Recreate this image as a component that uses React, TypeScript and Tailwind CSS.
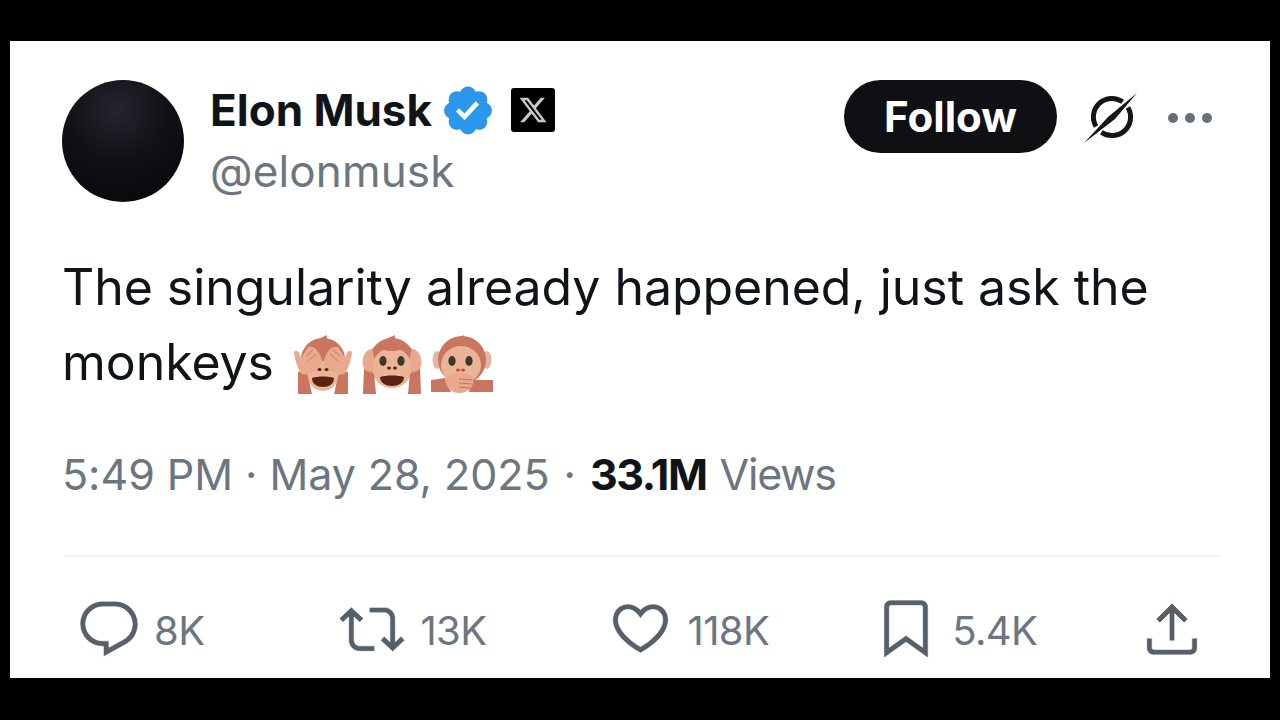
const sans = "font-['Inter','Liberation_Sans',sans-serif]";

function Glyph({ box, d, className }: { box: string; d: string; className: string }) {
  return (
    <svg viewBox={box} className={className} fill="currentColor" stroke="#ffffff" strokeWidth="0.25">
      <path d={d} />
    </svg>
  );
}

const FUR = "#c9755f";
const FUR_DARK = "#b9604f";
const SKIN = "#ebb397";
const HAND = "#e9a98e";
const MOUTH = "#5a2410";
const EYE = "#3c3a26";

function Tuft() {
  return <path d="M22 11 C25 6 30 5 34 3 C33 6 35 8 38 11 Z" fill={FUR} />;
}

function MonkeyOne() {
  return (
    <svg viewBox="0 0 60 62" className="w-[60px] h-[62px]">
      <Tuft />
      <ellipse cx="30" cy="27" rx="22" ry="21" fill={FUR} />
      <ellipse cx="30" cy="44" rx="15" ry="15" fill={SKIN} />
      <path d="M5 62 L5 40 L14 40 L19 62 Z" fill={FUR} />
      <path d="M55 62 L55 40 L46 40 L41 62 Z" fill={FUR} />
      <path d="M1 21 C1 18 5 18 6 21 L8 26 L15 15 C21 13 27 20 29 28 C29 34 25 39 21 39 C17 43 10 44 7 40 C4 34 2 28 1 21 Z" fill={HAND} />
      <path d="M59 21 C59 18 55 18 54 21 L52 26 L45 15 C39 13 33 20 31 28 C31 34 35 39 39 39 C43 43 50 44 53 40 C56 34 58 28 59 21 Z" fill={HAND} />
      <path d="M13 24 L20 18 M15 29 L23 22 M47 24 L40 18 M45 29 L37 22" stroke={FUR_DARK} strokeWidth="0.7" fill="none" />
      <ellipse cx="26.5" cy="37.5" rx="2" ry="1.6" fill={MOUTH} />
      <ellipse cx="33.5" cy="37.5" rx="2" ry="1.6" fill={MOUTH} />
      <path d="M19 46 C25 44 35 44 41 46 C41 52 36 55 30 55 C24 55 19 52 19 46 Z" fill={MOUTH} />
    </svg>
  );
}

function MonkeyTwo() {
  return (
    <svg viewBox="0 0 62 62" className="w-[62px] h-[62px]">
      <Tuft />
      <ellipse cx="31" cy="30" rx="23" ry="24" fill={FUR} />
      <ellipse cx="31" cy="36" rx="20" ry="20" fill={SKIN} />
      <path d="M2 62 L3 36 L13 42 L15 62 Z" fill={FUR} />
      <path d="M60 62 L59 36 L49 42 L47 62 Z" fill={FUR} />
      <path d="M2 34 C0 25 5 17 11 17 C13 22 14 30 12 39 C8 41 4 39 2 34 Z" fill={HAND} />
      <path d="M60 34 C62 25 57 17 51 17 C49 22 48 30 50 39 C54 41 58 39 60 34 Z" fill={HAND} />
      <path d="M11 17 C16 11 46 11 51 17 C44 15 38 19 31 19 C24 19 18 15 11 17 Z" fill={FUR} />
      <ellipse cx="22" cy="29" rx="3.6" ry="5" fill={EYE} />
      <ellipse cx="40" cy="29" rx="3.6" ry="5" fill={EYE} />
      <ellipse cx="28" cy="36" rx="2" ry="1.5" fill={MOUTH} />
      <ellipse cx="34" cy="36" rx="2" ry="1.5" fill={MOUTH} />
      <path d="M19 45 C25 43 37 43 43 45 C43 51 37 54 31 54 C25 54 19 51 19 45 Z" fill={MOUTH} />
    </svg>
  );
}

function MonkeyThree() {
  return (
    <svg viewBox="0 0 62 62" className="w-[62px] h-[62px]">
      <path d="M21 11 C24 6 29 5 33 3 C32 6 34 8 37 11 Z" fill={FUR} />
      <ellipse cx="6" cy="28" rx="4.5" ry="9" fill="#e3b5a4" />
      <ellipse cx="56" cy="28" rx="4.5" ry="9" fill="#e3b5a4" />
      <ellipse cx="31" cy="28" rx="24" ry="24" fill={FUR} />
      <ellipse cx="30" cy="33" rx="20" ry="19" fill={SKIN} />
      <ellipse cx="21" cy="29" rx="3.6" ry="5" fill={EYE} />
      <ellipse cx="38" cy="29" rx="3.6" ry="5" fill={EYE} />
      <ellipse cx="27" cy="38" rx="2" ry="1.6" fill="#c2483a" />
      <ellipse cx="32" cy="38" rx="2" ry="1.6" fill="#c2483a" />
      <path d="M0 48 L14 46 L20 60 L0 60 Z" fill={FUR} />
      <path d="M62 48 L40 48 L38 60 L62 60 Z" fill={FUR} />
      <path d="M14 47 C17 41 36 40 42 45 C44 51 40 60 30 61 C21 62 15 56 14 47 Z" fill={HAND} />
      <path d="M28 47 L41 48 M28 51 L41 52 M28 55 L39 56" stroke={FUR_DARK} strokeWidth="0.8" fill="none" />
    </svg>
  );
}

const actions = [
  {
    gap: "ml-0", textGap: "ml-[16px]", label: "8K", icon: "w-[58px] h-[56px] mb-[4px]", box: "1.75 2 20.5 19.7",
    d: "M1.751 10c0-4.42 3.584-8 8.005-8h4.366c4.49 0 8.129 3.64 8.129 8.13 0 2.96-1.607 5.68-4.196 7.11l-8.054 4.46v-3.69h-.067c-4.49.1-8.183-3.51-8.183-8.01zm8.005-6c-3.317 0-6.005 2.69-6.005 6 0 3.37 2.77 6.08 6.138 6.01l.351-.01h1.761v2.3l5.087-2.81c1.951-1.08 3.163-3.13 3.163-5.36 0-3.39-2.744-6.13-6.129-6.13H9.756z",
  },
  {
    gap: "ml-[135px]", textGap: "ml-[15px]", label: "13K", icon: "w-[66px] h-[46px] mb-[4px]", box: "0 3.88 24 16",
    d: "M4.5 3.88l4.432 4.14-1.364 1.46L5.5 7.55V16c0 1.1.896 2 2 2H13v2H7.5c-2.209 0-4-1.79-4-4V7.55L1.432 9.48.068 8.02 4.5 3.88zM16.5 6H11V4h5.5c2.209 0 4 1.79 4 4v8.45l2.068-1.93 1.364 1.46-4.432 4.14-4.432-4.14 1.364-1.46 2.068 1.93V8c0-1.1-.896-2-2-2z",
  },
  {
    gap: "ml-[126px]", textGap: "ml-[18px]", label: "118K", icon: "w-[57px] h-[50px] mb-[4px]", box: "1.75 3.5 20.5 18",
    d: "M16.697 5.5c-1.222-.06-2.679.51-3.89 2.16l-.805 1.09-.806-1.09C9.984 6.01 8.526 5.44 7.304 5.5c-1.243.07-2.349.78-2.91 1.91-.552 1.12-.633 2.78.479 4.82 1.074 1.97 3.257 4.27 7.129 6.61 3.87-2.34 6.052-4.64 7.126-6.61 1.111-2.04 1.03-3.7.477-4.82-.561-1.13-1.666-1.84-2.908-1.91zm4.187 7.69c-1.351 2.48-4.001 5.12-8.379 7.67l-.503.3-.504-.3c-4.379-2.55-7.029-5.19-8.382-7.67-1.36-2.5-1.41-4.86-.514-6.67.887-1.79 2.647-2.91 4.601-3.01 1.651-.09 3.368.56 4.798 2.01 1.429-1.45 3.146-2.1 4.796-2.01 1.954.1 3.714 1.22 4.601 3.01.896 1.81.846 4.17-.514 6.67z",
  },
  {
    gap: "ml-[114px]", textGap: "ml-[23px]", label: "5.4K", icon: "w-[46px] h-[58px] mb-[4px]", box: "4 2 16 20.94",
    d: "M4 4.5C4 3.12 5.119 2 6.5 2h11C18.881 2 20 3.12 20 4.5v18.44l-8-5.71-8 5.71V4.5zM6.5 4c-.276 0-.5.22-.5.5v14.56l6-4.29 6 4.29V4.5c0-.28-.224-.5-.5-.5h-11z",
  },
];

export default function App() {
  return (
    <div className={`${sans} w-[1280px] h-[720px] bg-black pt-[41px] pl-[10px] overflow-hidden`}>
      <div className="w-[1260px] h-[637px] bg-white pt-[39px] pl-[52px] pr-[50px] text-[#0f1419]">
        <div className="flex items-start h-[122px]">
          <div className="w-[122px] h-[122px] rounded-full bg-[radial-gradient(circle_at_45%_25%,#25252e_0%,#101016_45%,#05050a_100%)]" />
          <div className="ml-[26px] mt-[4px] flex flex-col">
            <div className="flex items-center h-[52px]">
              <span className="text-[44px] leading-[52px] font-bold">Elon Musk</span>
              <svg viewBox="1.75 1.5 20.5 21" className="ml-[12px] w-[48px] h-[49px]" fill="#2a97ec">
                <path d="M22.25 12c0-1.43-.88-2.67-2.19-3.34.46-1.39.2-2.9-.81-3.91s-2.52-1.27-3.91-.81c-.66-1.31-1.91-2.19-3.34-2.19s-2.67.88-3.33 2.19c-1.4-.46-2.91-.2-3.92.81s-1.26 2.52-.8 3.91c-1.31.67-2.2 1.91-2.2 3.34s.89 2.67 2.2 3.34c-.46 1.39-.21 2.9.8 3.91s2.52 1.26 3.91.81c.67 1.31 1.91 2.19 3.34 2.19s2.68-.88 3.34-2.19c1.39.45 2.9.2 3.91-.81s1.27-2.52.81-3.91c1.31-.67 2.19-1.91 2.19-3.34zm-11.71 4.2L6.8 12.46l1.41-1.42 2.26 2.26 4.8-5.23 1.47 1.36-6.2 6.77z" />
              </svg>
              <div className="ml-[19px] w-[44px] h-[44px] bg-black rounded-[3px] flex items-center justify-center">
                <svg viewBox="0 0 24 24" className="w-[30px] h-[30px]" fill="#c8c8c8">
                  <path d="M18.244 2.25h3.308l-7.227 8.26 8.502 11.24H16.17l-5.214-6.817L4.99 21.75H1.68l7.73-8.835L1.254 2.25H8.08l4.713 6.231zm-1.161 17.52h1.833L7.084 4.126H5.117z" />
                </svg>
              </div>
            </div>
            <span className="mt-[9px] text-[44px] leading-[52px] text-[#6b7680] tracking-[0.15px]">@elonmusk</span>
          </div>
          <div className="ml-auto flex items-start">
            <div className="w-[213px] h-[73px] rounded-full bg-[#0f1014] text-white flex items-center justify-center text-[42px] font-bold">
              Follow
            </div>
            <svg viewBox="0 0 54 52" className="ml-[27px] mt-[12px] w-[54px] h-[52px]" fill="none">
              <path d="M38.6 9.8 A18.5 18.5 0 0 0 12.1 34.5 M17.4 40.2 A18.5 18.5 0 0 0 43.9 15.5" stroke="#14141a" strokeWidth="5" />
              <path d="M53 1 L31 27 L0 51 L24 25 Z" fill="#14141a" />
            </svg>
            <div className="ml-[30px] mt-[33px] flex gap-[7px] pr-[8px]">
              <span className="w-[10px] h-[10px] rounded-full bg-[#667079]" />
              <span className="w-[10px] h-[10px] rounded-full bg-[#667079]" />
              <span className="w-[10px] h-[10px] rounded-full bg-[#667079]" />
            </div>
          </div>
        </div>

        <p className="mt-[48px] text-[50px] leading-[75px] text-[#0f1419] tracking-[-0.05px]">
          The singularity already happened, just ask the
          <br />
          <span className="inline-flex items-center">
            monkeys
            <span className="ml-[19px] inline-flex items-center gap-[8px]">
              <MonkeyOne />
              <MonkeyTwo />
              <MonkeyThree />
            </span>
          </span>
        </p>

        <div className="mt-[48px] flex items-center h-[52px] text-[43px] text-[#6b7680] tracking-[-0.05px] whitespace-pre">
          <span>5:49 PM · May 28, 2025</span>
          <span className="ml-[14px]">·</span>
          <span className="ml-[14px] font-bold text-[#0f1419] tracking-[-1.4px]">33.1M</span>
          <span className="ml-[13px] tracking-[-1.2px]">Views</span>
        </div>

        <div className="mt-[55px] ml-[2px] w-[1156px] h-[2px] bg-[#eff1f3]" />

        <div className="mt-[44px] ml-[18px] flex items-center h-[60px] text-[#566069]">
          {actions.map((a) => (
            <div key={a.label} className={`flex items-center ${a.gap}`}>
              <Glyph box={a.box} d={a.d} className={a.icon} />
              <span className={`${a.textGap} text-[40px] leading-none text-[#6b7680] tracking-[-0.6px]`}>{a.label}</span>
            </div>
          ))}
          <svg viewBox="3 2.59 18 18.41" className="ml-[108px] mb-[4px] w-[54px] h-[52px]" fill="currentColor" stroke="#ffffff" strokeWidth="0.3">
            <path d="M12 2.59l5.7 5.7-1.41 1.42L13 6.41V16h-2V6.41l-3.3 3.3-1.41-1.42L12 2.59zM21 15l-.02 3.51c0 1.38-1.12 2.49-2.5 2.49H5.5C4.11 21 3 19.88 3 18.5V15h2v3.5c0 .28.22.5.5.5h12.98c.28 0 .5-.22.5-.5L19 15h2z" />
          </svg>
        </div>
      </div>
    </div>
  );
}
